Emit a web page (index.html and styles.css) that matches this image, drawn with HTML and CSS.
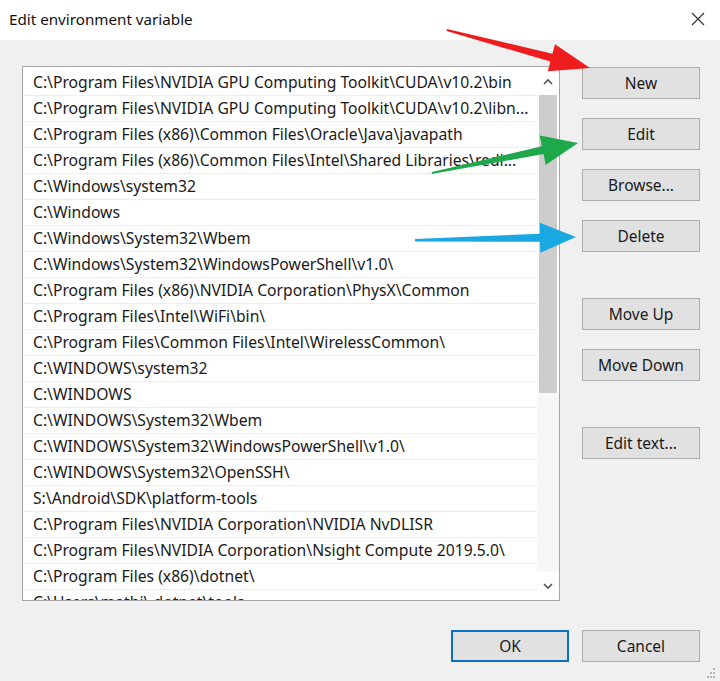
FILE: index.html
```html
<html>
<head>
  <meta charset="utf-8">
  <title>Edit environment variable</title>
  <link rel="stylesheet" href="styles.css">
</head>
<body>
  <div id="window">
    <div class="titlebar">
      <span class="title">Edit environment variable</span>
      <svg class="close" width="14" height="14" viewBox="0 0 14 14">
        <path d="M1 1 L13 13 M13 1 L1 13" stroke="#333" stroke-width="1.2" fill="none"/>
      </svg>
    </div>

    <div class="content">
      <div class="main">
        <div class="listbox">
          <ul class="items">
            <li>C:\Program Files\NVIDIA GPU Computing Toolkit\CUDA\v10.2\bin</li>
            <li>C:\Program Files\NVIDIA GPU Computing Toolkit\CUDA\v10.2\libn...</li>
            <li>C:\Program Files (x86)\Common Files\Oracle\Java\javapath</li>
            <li>C:\Program Files (x86)\Common Files\Intel\Shared Libraries\redi...</li>
            <li>C:\Windows\system32</li>
            <li>C:\Windows</li>
            <li>C:\Windows\System32\Wbem</li>
            <li>C:\Windows\System32\WindowsPowerShell\v1.0\</li>
            <li>C:\Program Files (x86)\NVIDIA Corporation\PhysX\Common</li>
            <li>C:\Program Files\Intel\WiFi\bin\</li>
            <li>C:\Program Files\Common Files\Intel\WirelessCommon\</li>
            <li>C:\WINDOWS\system32</li>
            <li>C:\WINDOWS</li>
            <li>C:\WINDOWS\System32\Wbem</li>
            <li>C:\WINDOWS\System32\WindowsPowerShell\v1.0\</li>
            <li>C:\WINDOWS\System32\OpenSSH\</li>
            <li>S:\Android\SDK\platform-tools</li>
            <li>C:\Program Files\NVIDIA Corporation\NVIDIA NvDLISR</li>
            <li>C:\Program Files\NVIDIA Corporation\Nsight Compute 2019.5.0\</li>
            <li>C:\Program Files (x86)\dotnet\</li>
            <li>C:\Users\mathi\.dotnet\tools</li>
          </ul>
          <div class="scrollbar">
            <div class="sb-btn">
              <svg width="10" height="7" viewBox="0 0 10 7"><path d="M1 6 L5 2 L9 6" stroke="#555" stroke-width="1.6" fill="none"/></svg>
            </div>
            <div class="thumb"></div>
            <div class="track"></div>
            <div class="sb-btn">
              <svg width="10" height="7" viewBox="0 0 10 7"><path d="M1 1 L5 5 L9 1" stroke="#555" stroke-width="1.6" fill="none"/></svg>
            </div>
          </div>
        </div>

        <div class="actions">
          <div class="btn">New</div>
          <div class="btn">Edit</div>
          <div class="btn">Browse...</div>
          <div class="btn">Delete</div>
          <div class="btn group">Move Up</div>
          <div class="btn">Move Down</div>
          <div class="btn group">Edit text...</div>
        </div>
      </div>

      <div class="footer">
        <div class="btn default">OK</div>
        <div class="btn">Cancel</div>
      </div>
    </div>

    <!-- size grip -->
    <svg class="grip" width="14" height="12" viewBox="0 0 14 12">
      <g fill="#b8b8b8">
        <rect x="10" y="1" width="2" height="2"/>
        <rect x="7" y="5" width="2" height="2"/>
        <rect x="10" y="5" width="2" height="2"/>
        <rect x="4" y="9" width="2" height="2"/>
        <rect x="7" y="9" width="2" height="2"/>
        <rect x="10" y="9" width="2" height="2"/>
      </g>
    </svg>

    <!-- annotation arrows drawn over the dialog -->
    <svg class="arrows" width="720" height="681" viewBox="0 0 720 681">
      <polygon fill="#ee1c1c" points="447,29 552.4,53.8 555,44.2 590,68 547.8,71.2 550.4,61.6 446.6,31"/>
      <polygon fill="#1fa84a" points="432,172 541.9,146.3 539.7,135.5 578,143 545.7,164.9 543.5,154.1 431.6,174"/>
      <polygon fill="#1aa8e2" points="415,239 540,233.7 539.7,222.7 576,237 540.3,252.7 540,241.7 415,241.5"/>
    </svg>
  </div>
</body>
</html>
```

FILE: styles.css
```css
body {
  margin: 0;
  font-family: 'Noto Sans', 'Open Sans', sans-serif;
  color: #111;
  background-color: #f0f0f0;
}

#window {
  position: relative;
  width: 720px;
  height: 681px;
  overflow: hidden;
  background-color: #f0f0f0;
}

.titlebar {
  height: 40px;
  display: flex;
  align-items: center;
  justify-content: space-between;
  padding: 0 15px 2px 9px;
  box-sizing: border-box;
  background-color: #fff;
}

.title {
  font-size: 15.2px;
  color: #111;
}

.content {
  padding: 26px 20px 0 22px;
}

.main {
  display: flex;
  gap: 22px;
}

.listbox {
  display: flex;
  width: 538px;
  height: 535px;
  box-sizing: border-box;
  border: 1px solid #a6a6a6;
  background-color: #fff;
  overflow: hidden;
}

.items {
  flex: 1;
  min-width: 0;
  list-style: none;
  margin: 0;
  padding: 3px 0 0 0;
  overflow: hidden;
}

.items li {
  height: 26px;
  line-height: 24px;
  padding: 0 2px 0 10px;
  box-sizing: border-box;
  border-bottom: 1px solid #ededed;
  font-size: 15.7px;
  color: #1a1a1a;
  white-space: nowrap;
  overflow: hidden;
  text-overflow: ellipsis;
}

.scrollbar {
  width: 22px;
  flex-shrink: 0;
  display: flex;
  flex-direction: column;
  background-color: #fff;
}

.sb-btn {
  height: 28px;
  display: flex;
  align-items: center;
  justify-content: center;
}

.thumb {
  height: 298px;
  margin: 0 2px;
  background-color: #cdcdcd;
}

.track {
  flex: 1;
  background-color: #f7f7f7;
}

.actions {
  width: 118px;
  padding-top: 1px;
  display: flex;
  flex-direction: column;
}

.btn {
  width: 118px;
  height: 32px;
  box-sizing: border-box;
  border: 1px solid #adadad;
  background-color: #e1e1e1;
  display: flex;
  align-items: center;
  justify-content: center;
  font-size: 15.5px;
  color: #1a1a1a;
}

.actions .btn + .btn {
  margin-top: 19px;
}

.actions .btn.group {
  margin-top: 46px;
}

.footer {
  display: flex;
  justify-content: flex-end;
  gap: 13px;
  margin-top: 29px;
}

.btn.default {
  border: 2px solid #0a6fc6;
}

.grip {
  position: absolute;
  right: 3px;
  bottom: 2px;
}

.arrows {
  position: absolute;
  left: 0;
  top: 0;
  pointer-events: none;
}
```
